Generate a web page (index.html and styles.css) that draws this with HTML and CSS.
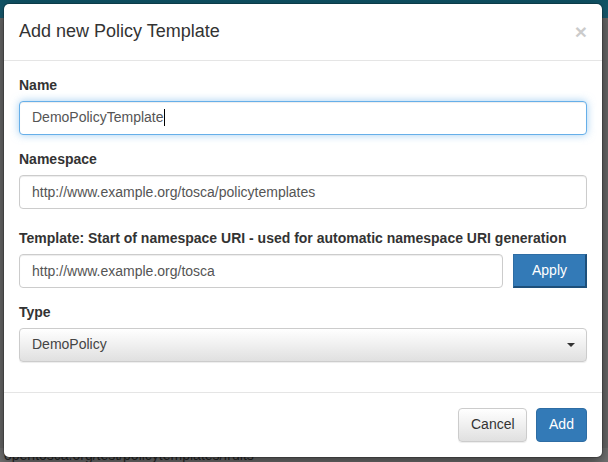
FILE: index.html
```html
<!DOCTYPE html>
<html>
<head>
<meta charset="utf-8">
<link rel="stylesheet" href="styles.css">
</head>
<body>
<div class="page">
  <div class="navbar"></div>
  <div class="page-content"></div>
  <div class="page-url">opentosca.org/test/policytemplates/fruits</div>
</div>
<div class="modal">
  <div class="modal-header">
    <h4 class="modal-title">Add new Policy Template</h4>
    <span class="close">&times;</span>
  </div>
  <div class="modal-body">
    <div class="form-group">
      <label class="label">Name</label>
      <div class="form-control focused">DemoPolicyTemplate<span class="caret-line"></span></div>
    </div>
    <div class="form-group">
      <label class="label">Namespace</label>
      <input class="form-control" type="text" value="http://www.example.org/tosca/policytemplates">
    </div>
    <div class="form-group template-group">
      <label class="label">Template: Start of namespace URI - used for automatic namespace URI generation</label>
      <div class="input-row">
        <input class="form-control" type="text" value="http://www.example.org/tosca">
        <button class="btn btn-primary btn-apply">Apply</button>
      </div>
    </div>
    <div class="form-group">
      <label class="label">Type</label>
      <div class="select">
        <span>DemoPolicy</span>
        <span class="caret"></span>
      </div>
    </div>
  </div>
  <div class="modal-footer">
    <button class="btn btn-default">Cancel</button>
    <button class="btn btn-primary">Add</button>
  </div>
</div>
</body>
</html>
```

FILE: styles.css
```css
* { box-sizing: border-box; }
html, body {
  margin: 0;
  padding: 0;
  width: 608px;
  height: 462px;
  overflow: hidden;
}
body {
  background: #737373;
  font-family: "Liberation Sans", Arial, Helvetica, sans-serif;
  font-size: 14px;
  line-height: 1.42857;
  color: #333;
  position: relative;
}
.page {
  display: flex;
  flex-direction: column;
  height: 462px;
}
.navbar {
  height: 18px;
  background: linear-gradient(to bottom, #0f5366, #1a6178);
}
.page-content {
  flex: 1;
  background: #6e6e6e;
}
.page-url {
  height: 14px;
  padding-left: 4px;
  font-size: 14px;
  line-height: 14px;
  color: #2a2a2a;
  background: #777;
  margin-top: -6px;
}
.modal {
  position: absolute;
  left: 3px;
  top: 3px;
  width: 600px;
  background: #fff;
  border: 1px solid rgba(0, 0, 0, 0.2);
  border-radius: 6px;
  box-shadow: 0 5px 15px rgba(0, 0, 0, 0.5);
  background-clip: padding-box;
}
.modal-header {
  padding: 15px;
  border-bottom: 1px solid #e5e5e5;
  display: flex;
  justify-content: space-between;
  align-items: flex-start;
}
.modal-title {
  margin: 0;
  font-size: 18px;
  font-weight: 500;
  line-height: 1.42857;
  color: #333;
}
.close {
  font-size: 21px;
  font-weight: bold;
  line-height: 1;
  color: #000;
  opacity: 0.2;
  margin-top: 2px;
}
.modal-body {
  padding: 15px;
}
.form-group {
  margin-bottom: 15px;
}
.template-group {
  margin-top: 20px;
}
.label {
  display: block;
  font-weight: bold;
  margin-bottom: 5px;
  height: 20px;
}
.form-control {
  display: block;
  width: 100%;
  height: 34px;
  padding: 6px 12px;
  font-family: "Liberation Sans", Arial, Helvetica, sans-serif;
  font-size: 14px;
  line-height: 1.42857;
  color: #555;
  background: #fff;
  border: 1px solid #ccc;
  border-radius: 4px;
  box-shadow: inset 0 1px 1px rgba(0, 0, 0, 0.075);
  outline: none;
  margin: 0;
}
.form-control.focused {
  border-color: #66afe9;
  box-shadow: inset 0 1px 1px rgba(0, 0, 0, 0.075), 0 0 8px rgba(102, 175, 233, 0.6);
}
.caret-line {
  display: inline-block;
  width: 1px;
  height: 17px;
  background: #000;
  vertical-align: -4px;
}
.input-row {
  display: flex;
  gap: 10px;
}
.input-row .form-control {
  flex: 1;
}
.btn {
  display: inline-block;
  height: 34px;
  padding: 6px 12px;
  font-family: "Liberation Sans", Arial, Helvetica, sans-serif;
  font-size: 14px;
  line-height: 1.42857;
  border: 1px solid transparent;
  border-radius: 4px;
  cursor: pointer;
  margin: 0;
}
.btn-primary {
  color: #fff;
  background: #337ab7;
  border-color: #2e6da4;
}
.btn-apply {
  width: 74px;
  flex: none;
  border-radius: 0;
  border-color: #2e6da4 #1d4f7a #1d4f7a #2e6da4;
  border-width: 1px 2px 2px 1px;
}
.btn-default {
  color: #333;
  background: linear-gradient(to bottom, #fff 0, #e0e0e0 100%);
  border-color: #ccc;
  box-shadow: inset 0 1px 0 rgba(255, 255, 255, 0.15), 0 1px 1px rgba(0, 0, 0, 0.075);
}
.select {
  height: 34px;
  display: flex;
  align-items: center;
  justify-content: space-between;
  padding: 6px 11px 6px 12px;
  color: #444;
  background: linear-gradient(to bottom, #fff 0, #e0e0e0 100%);
  border: 1px solid #ccc;
  border-radius: 4px;
  box-shadow: inset 0 1px 0 rgba(255, 255, 255, 0.15), 0 1px 1px rgba(0, 0, 0, 0.075);
}
.caret {
  width: 0;
  height: 0;
  border-top: 4px solid #333;
  border-left: 4px solid transparent;
  border-right: 4px solid transparent;
}
.modal-footer {
  padding: 15px;
  border-top: 1px solid #e5e5e5;
  display: flex;
  justify-content: flex-end;
  gap: 9px;
}
.modal-footer .btn-default {
  width: 69px;
}
.modal-footer .btn-primary {
  width: 51px;
}
```
